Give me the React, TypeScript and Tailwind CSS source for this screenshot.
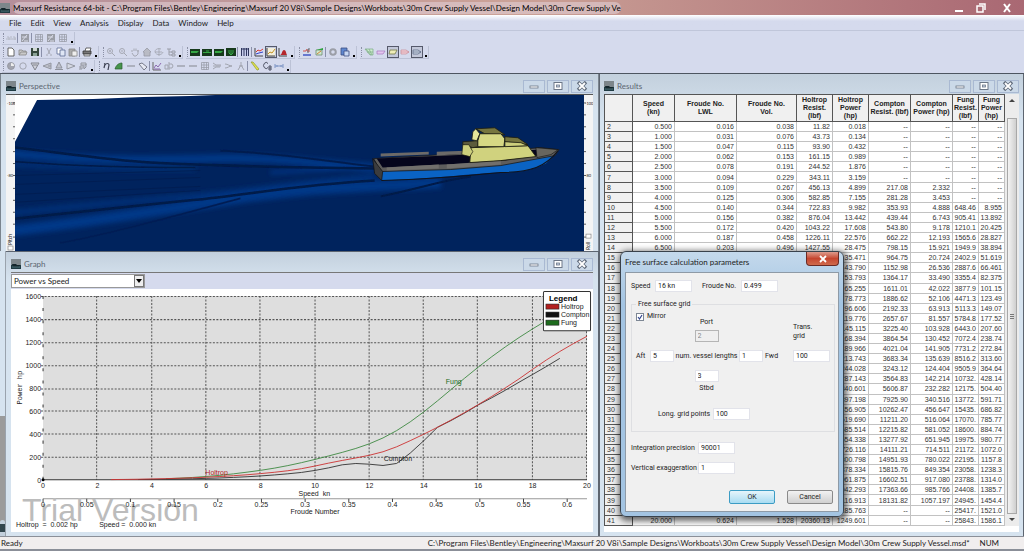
import type { ReactNode } from "react";
import clsx from "clsx";

/* ---------- data ---------- */

// holtrop resistance is derived from power where it is null
type Row = [number | null, number, string, string, string, string];

const rows: Row[] = [
    [11.82, 0.018, "--", "--", "--", "--"],
    [43.73, 0.134, "--", "--", "--", "--"],
    [93.9, 0.432, "--", "--", "--", "--"],
    [161.15, 0.989, "--", "--", "--", "--"],
    [244.52, 1.876, "--", "--", "--", "--"],
    [343.11, 3.159, "--", "--", "--", "--"],
    [456.13, 4.899, "217.08", "2.332", "--", "--"],
    [582.85, 7.155, "281.28", "3.453", "--", "--"],
    [722.83, 9.982, "353.93", "4.888", "648.46", "8.955"],
    [876.04, 13.442, "439.44", "6.743", "905.41", "13.892"],
    [1043.22, 17.608, "543.80", "9.178", "1210.1", "20.425"],
    [1226.11, 22.576, "662.22", "12.193", "1565.6", "28.827"],
    [1427.55, 28.475, "798.15", "15.921", "1949.9", "38.894"],
    [null, 35.471, "964.75", "20.724", "2402.9", "51.619"],
    [null, 43.79, "1152.98", "26.536", "2887.6", "66.461"],
    [null, 53.793, "1364.17", "33.490", "3355.4", "82.375"],
    [null, 65.255, "1611.01", "42.022", "3877.9", "101.15"],
    [null, 78.773, "1886.62", "52.106", "4471.3", "123.49"],
    [null, 96.606, "2192.33", "63.913", "5113.3", "149.07"],
    [null, 119.776, "2657.67", "81.557", "5784.8", "177.52"],
    [null, 145.115, "3225.40", "103.928", "6443.0", "207.60"],
    [null, 168.394, "3864.54", "130.452", "7072.4", "238.74"],
    [null, 189.966, "4021.04", "141.905", "7731.2", "272.84"],
    [null, 213.743, "3683.34", "135.639", "8516.2", "313.60"],
    [null, 244.028, "3243.12", "124.404", "9505.9", "364.64"],
    [null, 287.143, "3564.83", "142.214", "10732.", "428.14"],
    [null, 340.601, "5606.87", "232.282", "12175.", "504.40"],
    [null, 397.198, "7925.90", "340.516", "13772.", "591.71"],
    [null, 456.905, "10262.47", "456.647", "15435.", "686.82"],
    [null, 519.69, "11211.20", "516.064", "17070.", "785.77"],
    [null, 585.514, "12215.82", "581.052", "18600.", "884.74"],
    [null, 654.338, "13277.92", "651.945", "19975.", "980.77"],
    [null, 726.116, "14111.21", "714.511", "21172.", "1072.0"],
    [null, 800.798, "14951.93", "780.022", "22195.", "1157.8"],
    [null, 878.334, "15815.76", "849.354", "23058.", "1238.3"],
    [null, 961.875, "16602.51", "917.080", "23788.", "1314.0"],
    [null, 1042.293, "17363.66", "985.766", "24408.", "1385.7"],
    [null, 1116.913, "18131.82", "1057.197", "24945.", "1454.4"],
    [null, 1185.763, "--", "--", "25417.", "1521.0"],
    [20360.13, 1249.601, "--", "--", "25843.", "1586.1"],
];

const speedAt = (i: number) => (i + 1) / 2;

const columns = [
    { lines: [""], width: "w-[7%]" },
    { lines: ["Speed", "(kn)"], width: "w-[10.5%]" },
    { lines: ["Froude No.", "LWL"], width: "w-[15.5%]" },
    { lines: ["Froude No.", "Vol."], width: "w-[15%]" },
    { lines: ["Holtrop", "Resist.", "(lbf)"], width: "w-[9%]" },
    { lines: ["Holtrop", "Power", "(hp)"], width: "w-[9%]" },
    { lines: ["Compton", "Resist. (lbf)"], width: "w-[10.5%]" },
    { lines: ["Compton", "Power (hp)"], width: "w-[10.5%]" },
    { lines: ["Fung", "Resist.", "(lbf)"], width: "w-[6.5%]" },
    { lines: ["Fung", "Power", "(hp)"], width: "w-[6.5%]" },
];

/* ---------- toolbar ---------- */

const icons: Record<string, ReactNode> = {
    stf: <path d="M0 6h10M1 4h2v3M4 4h2M7 4h2v3" stroke="#b4b8c4" fill="none" />,
    gridDark: <><rect x="1" y="1" width="8" height="8" fill="#9a9da6" /><path d="M2 8l5-6M2 4h5M4 8h4" stroke="#d9dce8" /></>,
    grid: <path d="M1.500 1.500h7v7h-7zM4 1v8M6.500 1v8M1 4h8M1 6.500h8" stroke="#9b9eaa" strokeWidth=".8" fill="none" />,
    page: <path d="M2 1h4l2 2v6H2z" fill="#fff" stroke="#444" strokeWidth=".8" />,
    open: <path d="M1 8V3h3l1 1h3v1M1 8l2-3h6L8 8z" fill="#c9c9c9" stroke="#888" strokeWidth=".8" />,
    save: <><path d="M1 1h8v8H1z" fill="#33473c" /><path d="M3 1h4v3H3z" fill="#cfd8d2" /><path d="M3 6h4v3H3z" fill="#8aa397" /></>,
    cut: <path d="M3 1l3 6M7 1L4 7M2 8h2M6 8h2" stroke="#a5a8b3" fill="none" />,
    copy: <><path d="M1 1h5v6H1z" fill="#fff" stroke="#5a6a92" strokeWidth=".8" /><path d="M4 3h5v6H4z" fill="#dfe6f5" stroke="#5a6a92" strokeWidth=".8" /></>,
    paste: <><path d="M1 2h6v7H1z" fill="#aaa" stroke="#888" strokeWidth=".8" /><path d="M4 4h5v5H4z" fill="#eee" stroke="#888" strokeWidth=".8" /></>,
    print: <><path d="M3 4l1-3h5L8 4" fill="#fff" stroke="#444" strokeWidth=".8" /><path d="M1 4h8v3H1z" fill="#777" stroke="#333" strokeWidth=".8" /><path d="M2 7h6v2H2z" fill="#ccc" stroke="#444" strokeWidth=".6" /></>,
    zoomIn: <path d="M6.500 4a2.500 2.500 0 1 1-5 0a2.500 2.500 0 1 1 5 0M6 6l3 3M3 4h2M4 3v2" stroke="#a5a8b3" fill="none" />,
    zoomOut: <path d="M6.500 4a2.500 2.500 0 1 1-5 0a2.500 2.500 0 1 1 5 0M6 6l3 3M3 4h2" stroke="#a5a8b3" fill="none" />,
    hand: <path d="M2 5V3M4 4V1.500M6 4V1.500M8 5V3v4l-2 2H4L2 6" stroke="#a5a8b3" fill="none" />,
    home: <path d="M1 5l4-4l4 4H8v4H2V5z" fill="#b9bbc4" stroke="#989ba6" strokeWidth=".8" />,
    rotate: <path d="M5 1v8M1 5h7M7 2a4 3 0 1 0 2 3" stroke="#a5a8b3" fill="none" strokeWidth=".9" />,
    tree: <path d="M1 2h4M3 2v6h3M3 5h3M6 4h3v2H6zM6 7h3v2H6z" stroke="#9a9da8" fill="none" />,
    hull: <><rect y="2" width="10" height="7" fill="#173a1c" /><path d="M1 4h8l-2 2H1z" fill="#35a844" /></>,
    hullAlt: <><rect y="2" width="10" height="7" fill="#173a1c" /><path d="M1 5.500h8M4 4h3" stroke="#35a844" /></>,
    hullFront: <><rect y="1" width="10" height="8" fill="#173a1c" /><path d="M3 3v3l2 2l2-2V3M5 3v4" stroke="#35a844" fill="none" /></>,
    columns: <><rect x="1" y="1" width="8" height="8" fill="#c6ccec" /><path d="M1.500 1v8M4 1v8M6.500 1v8M8.500 1v8M1 2h8" stroke="#31385f" /></>,
    chart: <><rect x="1" y="1" width="8" height="8" fill="#d8dcf6" /><path d="M1 1v8h8" stroke="#444" fill="none" /><path d="M2 5l2-2l2 1l3-2" stroke="#d63c2c" fill="none" /><path d="M2 7l3-1l4-1" stroke="#3346c8" fill="none" /></>,
    curve: <><rect x="1" y="1" width="8" height="8" fill="#f3f0dc" /><path d="M1 1v8h8" stroke="#444" fill="none" /><path d="M2 7l2-2l2 1l3-4" stroke="#c39022" fill="none" /></>,
    histogram: <><path d="M1 1v8h8" stroke="#444" fill="none" /><path d="M2 8c2 0 2-5 4-5s2 3 3 5z" fill="#b5252b" /></>,
    boats: <><path d="M1 4h3l1-2M5 4h3" stroke="#d4514b" fill="none" /><path d="M1 8h8" stroke="#4257c4" strokeWidth="1.500" /><path d="M6 6V2h2" stroke="#444" fill="none" strokeWidth=".8" /></>,
    greenBoat: <><path d="M2 3h6v5H2z" fill="#cfe9cf" stroke="#6c8c6c" strokeWidth=".8" /><path d="M2 3l7-2v2" fill="#31a341" /><path d="M3 7l4-3" stroke="#d2833b" /></>,
    gear: <circle cx="5" cy="5" r="2.800" fill="none" stroke="#9b9ea7" strokeWidth="2" />,
    image: <><path d="M1 1h6v7H1z" fill="#5f87cf" stroke="#3c4f80" strokeWidth=".8" /><path d="M4 4h5v5H4z" fill="#c8d8f3" stroke="#3c4f80" strokeWidth=".8" /></>,
    hatch: <path d="M1 2h8v6H6zM2 2l5 6M5 2l3 6M3 5h6" fill="#cfeccf" stroke="#78a984" strokeWidth=".7" />,
    plane: <path d="M1 4h8L7 7H1z" fill="#e3c6ee" stroke="#a777bd" strokeWidth=".7" />,
    planeYellow: <path d="M2 3h7L7 7H1z" fill="#efedb8" stroke="#74794a" strokeWidth=".8" />,
    bowPink: <path d="M1 3h5l3 2l-3 2H1zM1 5h8" fill="#f5d4dc" stroke="#c98997" strokeWidth=".7" />,
    bow: <path d="M1 3h5l3 2l-3 2H1zM1 5h8" fill="#d2dcec" stroke="#5f6d88" strokeWidth=".8" />,
    ball: <><circle cx="5" cy="5" r="3.500" fill="#a3a5af" stroke="#8f929c" strokeWidth=".8" /><path d="M5 5V2a3 3 0 0 1 3 3z" fill="#eee" /></>,
    ring: <circle cx="5" cy="5" r="3.200" fill="none" stroke="#a3a6b1" />,
    down: <path d="M1 2h8L5 9zM3 4h4" fill="#cfd1da" stroke="#83868f" />,
    left: <path d="M9 2v6L1 5zM6 5h3" fill="#bfc1cb" stroke="#9497a1" />,
    up: <path d="M1 8.500h8M5 1L2 7h6z" fill="#bfc1cb" stroke="#8f929c" />,
    right: <path d="M1 2v6l8-3z" fill="#d5d8e3" stroke="#9497a1" />,
    stack: <path d="M3 2h5v2H3zM2 5h4v2H2zM1 8h3M8 3v3L6 8" stroke="#92959f" fill="#d5d8e3" />,
    eta: <path d="M2 7L3 3L2 2.500M3 4c1-2 4-2 4 0L6 9" stroke="#3d4152" fill="none" strokeWidth="1.200" />,
    sail: <path d="M1 8c1-4 4-6 7-6v6z" fill="#46944b" stroke="#2b5a31" strokeWidth=".7" />,
    line: <path d="M1 5h8" stroke="#84878f" />,
    diamond: <path d="M1 3l3-1l5 4l-3 3z" fill="#e7e9f3" stroke="#777b8a" />,
    axes: <><path d="M1 1v8h8" stroke="#666" fill="none" /><path d="M2 7l2-3l2 2l3-4M2 8h6" stroke="#8d6bb0" fill="none" /></>,
    section: <path d="M1 4h3v4H1zM5 1v8M5 3h3l1 2l-1 2H5" stroke="#a2a5b0" fill="none" />,
    flow: <path d="M1 2l3 2h5M1 5h8M1 8l3-2h4" stroke="#a2a5b0" fill="none" />,
    flow2: <path d="M1 3c3 0 4 2 7 2c-3 0-4 2-7 2" stroke="#a2a5b0" fill="none" />,
    person: <path d="M5 1v3M5 4L2 9M5 4l3 5M3 5h4" stroke="#a2a5b0" fill="none" />,
    ruler: <path d="M1 1l2 0l6 7l-1 1H7z" fill="#e4e34c" stroke="#8b9a30" strokeWidth=".7" />,
    cb: <path d="M6 2.500a2.500 3 0 1 0 0 4M7 5h2v4H7zM7 7h2" stroke="#4c5163" fill="none" />,
    span: <path d="M1 3v4M9 3v4M1 5h8M3 4v2M7 4v2" stroke="#7d94c4" fill="none" />,
};

// "|" is a separator, a leading "*" marks a pressed button
const toolbars = [
    [["stf", "|", "gridDark", "|", "grid", "gridDark", "grid"]],
    [
        ["page", "open", "save", "|", "cut", "copy", "paste", "|", "print"],
        ["zoomIn", "zoomOut", "hand", "home", "rotate", "tree"],
        ["hull", "hullAlt", "hull", "hullFront", "|", "columns", "|", "chart", "*curve", "histogram"],
        ["boats", "greenBoat", "|", "gear", "image"],
        ["hatch", "plane", "*planeYellow", "bowPink", "*bow"],
    ],
    [
        ["ball", "ring", "down", "left", "up", "right", "stack"],
        ["eta", "sail", "line", "diamond", "|", "axes", "section", "line", "line", "grid", "flow", "flow2", "person", "|", "ruler", "cb", "span"],
    ],
];

function ToolGroup({ items }: { items: string[] }) {
    return (
        <div className="flex h-[13px] items-center border-r border-b border-[#bcc2d6]">
            <span className="ml-px h-2.5 w-0.5 border-l border-dotted border-[#8b90a5]" />
            {items.map((item, i) => {
                if (item === "|") return <span key={i} className="mr-px h-2.5 w-px bg-[#8a90aa]" />;
                const pressed = item.startsWith("*");
                const name = item.replace("*", "");
                return (
                    <button
                        key={i}
                        type="button"
                        aria-label={name}
                        className={clsx("flex h-3 w-3 items-center justify-center", pressed && "border border-[#55596b] bg-[#c3c8da]")}
                    >
                        <svg viewBox="0 0 10 10" className="h-2.5 w-2.5 shrink-0">{icons[name]}</svg>
                    </button>
                );
            })}
            <span className="flex h-2.5 w-[5px] items-end pl-0.5">
                <span className="h-0.5 w-0.5 bg-black" />
            </span>
        </div>
    );
}

/* ---------- window chrome ---------- */

function AppIcon() {
    return (
        <svg viewBox="0 0 10 10" className="h-2.5 w-2.5 shrink-0">
            <rect width="10" height="10" fill="#7d868b" />
            <path d="M0 6h10v4H0z" fill="#1f3a42" />
            <path d="M1 5h4l1 1h3L8 8H2z" fill="#14262c" />
            <path d="M1 8h8" stroke="#6fa0a4" strokeWidth=".6" />
        </svg>
    );
}

const glyphs = {
    Minimize: <rect x="3" y="5" width="8" height="2" fill="#fff" stroke="#6c7787" strokeWidth=".8" />,
    Maximize: <><rect x="3" y="1.500" width="8" height="7" fill="#fff" stroke="#6c7787" /><rect x="5.500" y="4" width="3" height="2" fill="#c6d3e4" stroke="#6c7787" strokeWidth=".8" /></>,
    Close: <><path d="M3 1l8 8M11 1L3 9" stroke="#5f6a7a" strokeWidth="3.400" /><path d="M4 2l6 6M10 2L4 8" stroke="#fff" strokeWidth="1.800" /></>,
};

function WindowTitle({ title }: { title: string }) {
    return (
        <div className="flex h-5 shrink-0 items-center gap-[3px] pt-1">
            <AppIcon />
            <h2 className="flex-1 text-[8px] leading-3 text-[#5c6671]">{title}</h2>
            <div className="flex gap-0.5">
                {(Object.keys(glyphs) as (keyof typeof glyphs)[]).map((name) => (
                    <button key={name} type="button" aria-label={name} className="flex h-[13px] w-[22px] items-center justify-center border border-[#a9b9d2] bg-[#cbd9e8]">
                        <svg viewBox="0 0 14 10" className="h-2.5 w-3.5">{glyphs[name]}</svg>
                    </button>
                ))}
            </div>
        </div>
    );
}

/* ---------- perspective ---------- */

function Ruler({ flip }: { flip?: boolean }) {
    const x = flip ? 0 : 7;
    return (
        <svg viewBox="0 0 9 157" preserveAspectRatio="none" className="h-full w-[9px] shrink-0 bg-[#f4f4f4]">
            {[8, 20, 32, 44, 57, 69, 81, 94, 106, 118, 130, 143].map((y) => (
                <path key={y} d={`M${x} ${y}h2`} stroke="#333" strokeWidth=".8" />
            ))}
            <text x="1" y="10" fontSize="4" fill="#222">-100</text>
            <text x="1" y="83" fontSize="4" fill="#222">-80</text>
            <text transform={flip ? "translate(6 156) rotate(-90)" : "translate(6 151) rotate(-90)"} fontSize="5" fill="#222">{flip ? "Roll" : "Pitch"}</text>
            <rect x="2" y={flip ? 140 : 152} width="5" height="4" fill="#fff" stroke="#777" strokeWidth=".6" />
        </svg>
    );
}

function Scene() {
    return (
        <svg viewBox="15 94 568 157" preserveAspectRatio="none" className="h-full min-w-0 flex-1 bg-[#00235d]">
            <defs>
                <filter id="soft" x="-20%" y="-50%" width="140%" height="200%"><feGaussianBlur stdDeviation="2.500" /></filter>
                <filter id="thin" x="-20%" y="-50%" width="140%" height="200%"><feGaussianBlur stdDeviation=".7" /></filter>
            </defs>
            <g fill="none" filter="url(#soft)">
                <path d="M0 152C80 160 140 160 210 158S320 164 374 167" stroke="#003787" strokeWidth="8" />
                <path d="M0 163C80 168 140 168 195 168" stroke="#003079" strokeWidth="4" />
                <path d="M0 214C80 205 140 200 200 195S310 180 374 176" stroke="#00317b" strokeWidth="5" />
                <path d="M0 232C90 222 160 210 230 199S330 188 440 182" stroke="#003787" strokeWidth="11" />
                <path d="M270 172C310 170 340 167 374 167" stroke="#00398d" strokeWidth="3" />
            </g>
            <g fill="none" filter="url(#thin)" stroke="#001a48">
                <path d="M0 145C60 152 110 160 150 162S280 167 374 168" strokeWidth="2.500" />
                <path d="M0 160C80 166 130 167 195 167" strokeWidth="1.500" />
                <path d="M0 220C80 211 130 206 190 200S300 184 374 180" strokeWidth="2.500" />
                <path d="M60 243C120 232 180 214 240 198" strokeWidth="2" stroke="#001f55" />
                <path d="M380 196C420 188 440 180 470 176" strokeWidth="2" />
                <path d="M220 150C280 152 320 160 374 166" strokeWidth="2" stroke="#001d50" />
            </g>
            <path d="M15 175L200 170M15 184L200 177M15 194L200 186M15 202L200 190" stroke="#001d50" fill="none" strokeWidth=".8" />
            <path d="M15 94h200l-25 1l-47 1l-50 2l-56 1L15 141z" fill="#fff" />
            {/* hull */}
            <path d="M380 171L450 168L500 163L556 152L545 163C530 170 520 172 500 172S440 178 381 180z" fill="#0a63c4" />
            <path d="M373 158L460 153L540 147L558 149L554 155L500 165L450 169L380 171z" fill="#5e5d5c" stroke="#1a1a1a" strokeWidth=".8" />
            <path d="M376 158L470 154L535 149L545 154L490 162L440 164L382 167z" fill="#05051c" />
            <path d="M380 153L428 151V154L380 156zM436 151L466 150V153L436 155z" fill="#6c6a68" />
            <path d="M386 167L438 164V168L386 170zM446 164L500 160V164L446 168z" fill="#716f6c" />
            <path d="M372 158L382 171L381 180L374 173z" fill="#3b3c3e" stroke="#111" strokeWidth=".7" />
            <path d="M381 180C420 179 470 175 500 172C530 172 545 166 557 150" fill="none" stroke="#10131c" strokeWidth="1" />
            <path d="M535 147L557 149L550 154L536 157z" fill="#68665f" stroke="#111" strokeWidth=".6" />
            {/* superstructure */}
            <path d="M470 147L527 145L535 156L500 160L469 162z" fill="#d0d27e" stroke="#1c1c10" strokeWidth=".9" />
            <path d="M462 141L477 140V146L472 147L462 144z" fill="#5c5b3c" stroke="#1c1c10" strokeWidth=".8" />
            <path d="M462 144L468 144L472 151L469 156L461 154z" fill="#cccf7c" stroke="#1c1c10" strokeWidth=".7" />
            <path d="M472 131L475 128L479 133L476 140L471 139z" fill="#e4e69a" stroke="#1c1c10" strokeWidth=".8" />
            <path d="M475 128L494 127L504 134L484 133z" fill="#77763f" stroke="#1c1c10" strokeWidth=".8" />
            <path d="M479 133L500 133L504 138L503 146H477L477 140z" fill="#d6d884" stroke="#1c1c10" strokeWidth=".9" />
            <path d="M504 136L517 137L527 144L504 141z" fill="#77763f" stroke="#1c1c10" strokeWidth=".8" />
            <path d="M504 141L520 142L527 145L504 146z" fill="#cdcf7c" stroke="#1c1c10" strokeWidth=".8" />
        </svg>
    );
}

/* ---------- graph ---------- */

const px = (speed: number) => 44 + speed * 27.15;
const py = (power: number) => 479 - (power / 1600) * 183;

const curve = (col: 1 | 3 | 5, from = 0) =>
    rows
        .map((r, i) => ({ speed: speedAt(i), power: Number(r[col]) }))
        .filter((p) => !Number.isNaN(p.power) && p.speed >= from)
        .map((p) => `${px(p.speed)},${py(p.power)}`)
        .join(" ");

const legend = [
    { name: "Holtrop", color: "#b3201f" },
    { name: "Compton", color: "#111111" },
    { name: "Fung", color: "#1d6b1d" },
];

function Chart() {
    return (
        <svg viewBox="12 289 581 242" preserveAspectRatio="none" className="h-full w-full bg-white" fontFamily="Liberation Sans, sans-serif" fontSize="7" fill="#222">
            <rect x="44" y="296" width="543" height="183" fill="#dedede" />
            <g stroke="#555" strokeWidth="1" strokeDasharray="2 1.500">
                {[1, 2, 3, 4, 5, 6, 7, 8, 9, 10].map((i) => <path key={i} d={`M${Math.round(px(i * 2)) - 0.5} 296V479`} />)}
                {[1, 2, 3, 4, 5, 6, 7, 8].map((i) => <path key={i} d={`M42 ${Math.round(py(i * 200)) + 0.5}H587`} />)}
            </g>
            <path d="M44 296V479" stroke="#333" strokeDasharray="3 9" />
            <path d="M44 479H587" stroke="#333" />
            <path d="M44 498H587" stroke="#999" />
            <circle cx="44" cy="479" r="1.500" fill="#000" />
            <text x="23" y="520" fontSize="32" fill="#bcbcbc">Trial Version</text>
            {[0, 200, 400, 600, 800, 1000, 1200, 1400, 1600].map((v) => (
                <text key={v} x="42" y={py(v) + 3} textAnchor="end">{v}</text>
            ))}
            {[0, 2, 4, 6, 8, 10, 12, 14, 16, 18, 20].map((v) => (
                <text key={v} x={px(v)} y="487" textAnchor="middle">{v}</text>
            ))}
            {[0, 0.05, 0.1, 0.15, 0.2, 0.25, 0.3, 0.35, 0.4, 0.45, 0.5, 0.55, 0.6].map((v) => (
                <g key={v}>
                    <path d={`M${44 + v * 872} 498v3`} stroke="#444" />
                    <text x={44 + v * 872} y="506" textAnchor="middle">{v}</text>
                </g>
            ))}
            <text x="299" y="495" xmlSpace="preserve">Speed  kn</text>
            <text x="291" y="513">Froude Number</text>
            <text transform="translate(23 404) rotate(-90)" fontFamily="Liberation Mono, monospace">Power hp</text>
            <g fill="none" strokeWidth=".9">
                <polyline points={curve(5)} stroke="#3f8a42" />
                <polyline points={curve(3)} stroke="#333" />
                <polyline points={curve(1, 2.5)} stroke="#cc3333" />
            </g>
            <text x="206" y="474" fill="#b3201f">Holtrop</text>
            <text x="384" y="460">Compton</text>
            <text x="446" y="384" fill="#1d6b1d">Fung</text>
            <text x="17" y="526" xmlSpace="preserve">Holtrop  =  0.002 hp</text>
            <text x="100" y="526" xmlSpace="preserve">Speed =  0.000 kn</text>
            {/* legend box */}
            <rect x="543.500" y="291.500" width="47" height="39" rx="1" fill="#fff" stroke="#333" />
            <text x="549" y="301" fontSize="8" fontWeight="bold" fill="#000">Legend</text>
            {legend.map((l, i) => (
                <g key={l.name}>
                    <rect x="546" y={304 + i * 8} width="13" height="5" fill={l.color} stroke="#222" strokeWidth=".6" />
                    <text x="561" y={309 + i * 8}>{l.name}</text>
                </g>
            ))}
        </svg>
    );
}

/* ---------- results ---------- */

function ResultsTable() {
    return (
        <table className="h-full min-w-0 flex-1 table-fixed border-collapse bg-white font-['Liberation_Sans',sans-serif] text-[7px] leading-[9px] text-[#333]">
            <thead>
                <tr className="h-[27px] bg-[#f0f0f0] leading-2 text-[#222]">
                    {columns.map((c) => (
                        <th key={c.lines.join(" ")} scope="col" className={clsx("overflow-hidden border border-[#555] p-0 text-center align-middle font-bold whitespace-nowrap", c.width)}>
                            {c.lines.map((line) => <span key={line} className="block">{line}</span>)}
                        </th>
                    ))}
                </tr>
            </thead>
            <tbody>
                {rows.map(([resist, power, ...rest], i) => {
                    const speed = speedAt(i);
                    const cells = [
                        speed.toFixed(3),
                        (speed * 0.0312).toFixed(3),
                        (speed * 0.07638).toFixed(3),
                        (resist ?? power / (speed * 0.0030688)).toFixed(2),
                        power.toFixed(3),
                        ...rest,
                    ];
                    return (
                        <tr key={i}>
                            <th scope="row" className="border border-[#555] bg-[#f0f0f0] py-0 pr-0 pl-0.5 text-left font-normal">{i + 2}</th>
                            {cells.map((cell, j) => (
                                <td key={j} className="overflow-hidden border border-[#c2c2c2] py-0 pr-0.5 pl-0 text-right whitespace-nowrap">{cell}</td>
                            ))}
                        </tr>
                    );
                })}
            </tbody>
        </table>
    );
}

function ScrollBar() {
    return (
        <div className="flex w-3.5 shrink-0 flex-col items-center bg-[#ececec] py-1">
            <svg viewBox="0 0 6 4" className="h-1 w-1.5"><path d="M0 4l3-3l3 3z" fill="#444" /></svg>
            <div className="mt-4 flex w-2.5 flex-1 flex-col items-center justify-center gap-px border border-[#a8a8a8] bg-linear-to-r from-[#f4f4f4] to-[#cfcfcf]">
                <span className="h-px w-1 bg-[#777]" />
                <span className="h-px w-1 bg-[#777]" />
                <span className="h-px w-1 bg-[#777]" />
            </div>
            <svg viewBox="0 0 6 4" className="mt-1 h-1 w-1.5"><path d="M0 0l3 3l3-3z" fill="#444" /></svg>
        </div>
    );
}

/* ---------- dialog ---------- */

type FieldProps = { id: string; value: string; className?: string; disabled?: boolean };

function Box({ id, value, className, disabled }: FieldProps) {
    return (
        <input
            id={id}
            defaultValue={value}
            disabled={disabled}
            className={clsx("h-3 border px-0.5", disabled ? "border-[#b5b5b5] bg-[#efefef] text-[#888]" : "border-[#e2e3ea] bg-white", className)}
        />
    );
}

function Dialog() {
    return (
        <div
            role="dialog"
            aria-label="Free surface calculation parameters"
            className="absolute top-[251px] left-[620px] w-[224px] rounded-md border border-[#39424c] bg-linear-to-b from-[#c4d9ec] to-[#a3c4e2] to-20% px-1 pb-1 font-[Roboto,sans-serif] text-[7px] leading-[9px] whitespace-nowrap text-[#222] shadow-[1px_2px_6px_2px_rgba(0,0,0,0.6)]"
        >
            <div className="flex h-5 items-start justify-between">
                <h2 className="pt-1.5 font-[Lato,sans-serif] text-[8px]">Free surface calculation parameters</h2>
                <button type="button" aria-label="Close" className="flex h-3.5 w-[33px] items-center justify-center rounded-b border border-t-0 border-[#6b2a24] bg-linear-to-b from-[#dd9a8c] via-[#c5452f] to-[#cf6a4c]">
                    <svg viewBox="0 0 8 8" className="h-2 w-2"><path d="M1 1l6 6M7 1L1 7" stroke="#fff" strokeWidth="1.800" /></svg>
                </button>
            </div>
            <form className="border border-[#8e9aa6] bg-[#f0f0f0] px-[5px] py-[7px]">
                <div className="flex items-center">
                    <label htmlFor="speed" className="w-6">Speed</label>
                    <Box id="speed" value="16 kn" className="w-[37px]" />
                    <label htmlFor="froude" className="ml-2.5 w-[39px]">Froude No.</label>
                    <Box id="froude" value="0.499" className="w-[37px]" />
                </div>
                <fieldset className="mt-2 h-[132px] border border-[#dedfe2] px-1">
                    <legend className="px-0.5">Free surface grid</legend>
                    <label className="relative mt-[3px] -mb-[3px] flex items-center gap-[3px]">
                        <input type="checkbox" defaultChecked className="peer m-0 h-2 w-2 appearance-none border border-[#7d8794] bg-white" />
                        <svg viewBox="0 0 8 8" className="absolute left-0 hidden h-2 w-2 peer-checked:block"><path d="M2 4l1.500 2L6 2" fill="none" stroke="#31468f" strokeWidth="1.200" /></svg>
                        Mirror
                    </label>
                    <div className="grid grid-cols-[38px_65px_54px_37px] items-center">
                        <div className="col-start-2 flex flex-col items-center gap-[3px]">
                            <label htmlFor="port">Port</label>
                            <Box id="port" value="2" disabled className="w-6" />
                        </div>
                        <label htmlFor="trans" className="col-start-4 self-end pb-px">Trans.<br />grid</label>
                        <div className="col-start-1 flex h-7 items-center justify-between">
                            <label htmlFor="aft">Aft</label>
                            <Box id="aft" value="5" className="w-6" />
                        </div>
                        <span className="text-center">num. vessel lengths</span>
                        <div className="flex items-center gap-0.5">
                            <Box id="fwd" value="1" className="w-6" />
                            <label htmlFor="fwd">Fwd</label>
                        </div>
                        <Box id="trans" value="100" className="w-[37px]" />
                        <div className="col-start-2 flex flex-col items-center gap-0.5">
                            <Box id="stbd" value="3" className="w-6" />
                            <label htmlFor="stbd">Stbd</label>
                        </div>
                    </div>
                    <div className="mt-[15px] ml-[22px] flex items-center">
                        <label htmlFor="points" className="w-[55px]">Long. grid points</label>
                        <Box id="points" value="100" className="w-[37px]" />
                    </div>
                </fieldset>
                <div className="mt-2.5 flex items-center">
                    <label htmlFor="precision" className="w-[67px]">Integration precision</label>
                    <Box id="precision" value="90001" className="w-[37px]" />
                </div>
                <div className="mt-2 flex items-center">
                    <label htmlFor="exaggeration" className="w-[67px]">Vertical exaggeration</label>
                    <Box id="exaggeration" value="1" className="w-[37px]" />
                </div>
                <div className="mt-4 flex justify-end gap-3">
                    <button type="button" className="h-3.5 w-[46px] rounded-xs border border-[#3c9cc4] bg-linear-to-b from-[#e6f5fb] to-[#a8dcf2]">OK</button>
                    <button type="button" className="h-3.5 w-[46px] rounded-xs border border-[#8a8a8a] bg-linear-to-b from-[#f2f2f2] to-[#d0d0d0]">Cancel</button>
                </div>
            </form>
        </div>
    );
}

/* ---------- app ---------- */

const menu = ["File", "Edit", "View", "Analysis", "Display", "Data", "Window", "Help"];
const model = "C:\\Program Files\\Bentley\\Engineering\\Maxsurf 20 V8i\\Sample Designs\\Workboats\\30m Crew Supply Vessel\\Design Model\\30m Crew Supply Ve";

export default function App() {
    return (
        <div className="relative flex h-screen flex-col overflow-hidden bg-[#d5daed] font-[Lato,'Open_Sans',sans-serif] text-[8px] leading-3 text-[#222]">
            <header className="flex h-[15px] shrink-0 items-center bg-linear-to-r from-[#b58f9b] via-[#cba297] to-[#a96873]">
                <AppIcon />
                <h1 className="ml-[3px] rounded-full bg-[#e0cdd4]/60 whitespace-nowrap text-black">Maxsurf Resistance 64-bit - {model}</h1>
                <div className="ml-auto flex gap-3 pr-3">
                    <button type="button" aria-label="Minimize app"><svg viewBox="0 0 10 10" className="h-2.5 w-2.5"><path d="M1 8h8" stroke="#fff" strokeWidth="2" /></svg></button>
                    <button type="button" aria-label="Restore app"><svg viewBox="0 0 10 10" className="h-2.5 w-2.5"><path d="M3 1h6v6M1 3h6v6H1z" stroke="#fff" strokeWidth="1.500" fill="none" /></svg></button>
                    <button type="button" aria-label="Close app" className="ml-1"><svg viewBox="0 0 10 10" className="h-2.5 w-2.5"><path d="M2 1l6 8M8 1L2 9" stroke="#fff" strokeWidth="2" /></svg></button>
                </div>
            </header>

            <nav className="flex h-4 shrink-0 items-center gap-[9px] border-b border-[#c0c6da] bg-linear-to-b from-white to-[#d5daed] to-40% pl-[9px]">
                {menu.map((m) => <button key={m} type="button">{m}</button>)}
            </nav>

            <div className="flex shrink-0 flex-col gap-px pt-px pl-0.5">
                {toolbars.map((bar, i) => (
                    <div key={i} className="flex gap-[3px]">
                        {bar.map((items, j) => <ToolGroup key={j} items={items} />)}
                    </div>
                ))}
            </div>

            <main className="flex min-h-0 flex-1 border-t border-[#4d5560] bg-[#a0a0a0]">
                <div className="flex w-[58.5%] min-w-0 flex-col">
                    <section className="flex h-[177px] shrink-0 flex-col border-x border-[#7b858f] bg-linear-to-b from-[#c3d0dd] to-[#d6e3ef] to-20% px-[5px]">
                        <WindowTitle title="Perspective" />
                        <div className="flex min-h-0 flex-1 border-t border-[#555]">
                            <Ruler />
                            <Scene />
                            <Ruler flip />
                        </div>
                    </section>
                    <div className="flex min-h-0 flex-1">
                        <div className="flex w-1.5 shrink-0 flex-col border-r border-[#9aa3ad]">
                            <div className="h-[165px] bg-[#d6e3ef]" />
                            <div className="flex-1 bg-[#9b9b9b]" />
                            <div className="h-4 rounded-t bg-[#c3d0dd] pt-1"><div className="h-2 bg-[#33474f]" /></div>
                        </div>
                        <section className="flex min-w-0 flex-1 flex-col border-t border-r border-[#5d6570] bg-linear-to-b from-[#c3d0dd] to-[#d6e3ef] to-10% px-[5px] pb-1">
                            <WindowTitle title="Graph" />
                            <div className="flex h-[17px] shrink-0 items-center border-t border-[#777] bg-[#d5daed]">
                                <div className="relative flex h-3.5 w-[134px] border border-[#999] bg-white">
                                    <select aria-label="Graph type" className="w-full appearance-none px-0.5 text-[8px] leading-3">
                                        <option>Power vs Speed</option>
                                    </select>
                                    <span className="pointer-events-none absolute top-0 right-0 flex h-3 w-2.5 items-center justify-center border border-[#777] bg-[#eee]">
                                        <svg viewBox="0 0 6 4" className="h-1 w-1.5"><path d="M0 0h6L3 4z" fill="#000" /></svg>
                                    </span>
                                </div>
                            </div>
                            <div className="min-h-0 flex-1"><Chart /></div>
                        </section>
                    </div>
                </div>
                <section className="flex min-w-0 flex-1 flex-col border-x border-[#5d6570] bg-linear-to-b from-[#c3d0dd] to-[#d6e3ef] to-10% px-1 pb-1">
                    <WindowTitle title="Results" />
                    <div className="flex min-h-0 flex-1 bg-white pb-1.5">
                        <ResultsTable />
                        <ScrollBar />
                    </div>
                </section>
            </main>

            <footer className="flex h-[15px] shrink-0 items-center border-t border-b-2 border-[#8b8f98] bg-[#f1eeee] px-px">
                <span className="flex-1">Ready</span>
                <span className="whitespace-nowrap">{model}ssel.msd*</span>
                <span className="mr-6 ml-2.5">NUM</span>
            </footer>

            <Dialog />
        </div>
    );
}
